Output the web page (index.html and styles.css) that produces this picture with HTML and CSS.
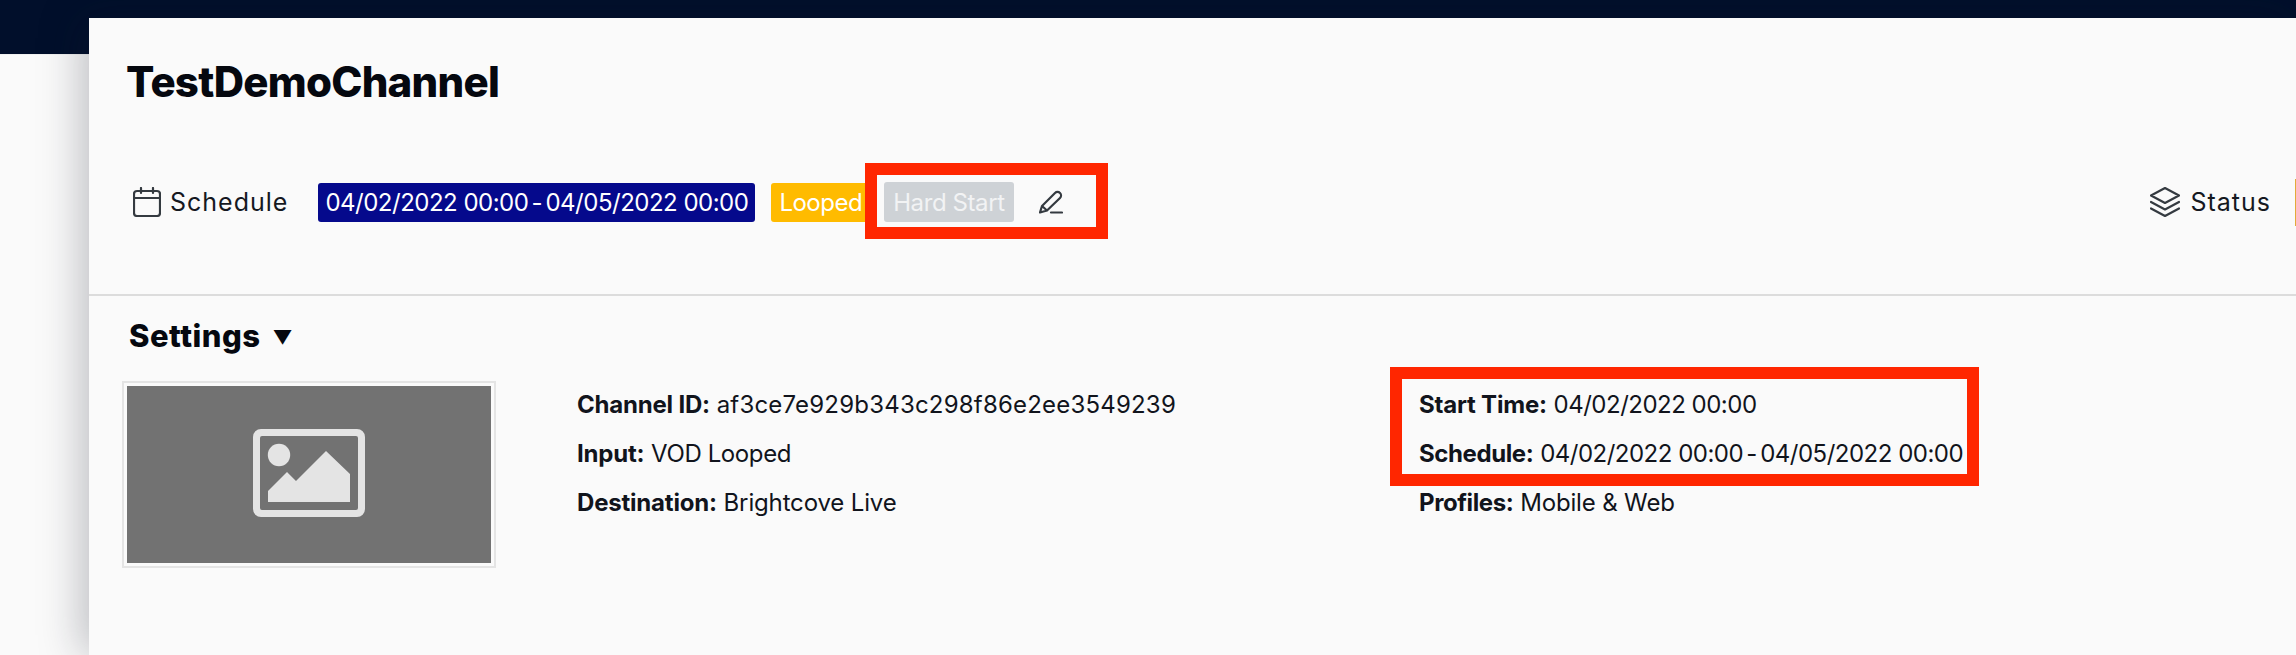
FILE: index.html
```html
<!DOCTYPE html>
<html lang="en">
<head>
<meta charset="utf-8">
<title>TestDemoChannel</title>
<link rel="stylesheet" href="styles.css">
</head>
<body>
<div class="app-header"></div>
<main class="panel">
  <h1 class="title">TestDemoChannel</h1>
  <div class="toolbar">
    <div class="label-icon">
      <svg class="icon-cal" viewBox="0 0 28 30" aria-hidden="true"><rect x="1" y="4" width="26" height="25" rx="3"/><path d="M1 11h26M8 1v5M20 1v5"/></svg>
      <span>Schedule</span>
    </div>
    <span class="badge badge-navy"><span class="num">04/02/2022 00:00</span><span class="sep">-</span><span class="num">04/05/2022 00:00</span></span>
    <span class="badge badge-yellow">Looped</span>
    <span class="badge badge-grey">Hard Start</span>
    <svg class="pencil" viewBox="0 0 24 24" aria-hidden="true"><path d="M1 22.5 3 16 16 3a3.5 3.5 0 0 1 5 5L8 20.5 1 22.5ZM3 16l5 4.5M12 22.5h11"/></svg>
    <div class="status label-icon">
      <svg class="icon-layers" viewBox="0 0 30 30" aria-hidden="true"><path d="M15 1 29 8.5 15 16 1 8.5 15 1ZM1 15l14 7.5L29 15M1 21.5 15 29l14-7.5"/></svg>
      <span>Status</span>
    </div>
  </div>
  <section class="settings">
    <h2 class="settings-title">Settings<span class="caret">▼</span></h2>
    <div class="settings-body">
      <div class="thumb">
        <div class="thumb-fill">
          <svg viewBox="0 0 112 88" aria-hidden="true"><path fill-rule="evenodd" d="M8 0h96a8 8 0 0 1 8 8v72a8 8 0 0 1-8 8H8a8 8 0 0 1-8-8V8a8 8 0 0 1 8-8Zm1 7a2 2 0 0 0-2 2v70a2 2 0 0 0 2 2h94a2 2 0 0 0 2-2V9a2 2 0 0 0-2-2H9Z"/><circle cx="26" cy="26" r="11.2"/><path d="M15 73V62l19-19 9 9 30-30 24 23v28H15Z"/></svg>
        </div>
      </div>
      <div class="col col-a">
        <div class="row"><b>Channel ID:</b> <span class="val-wide">af3ce7e929b343c298f86e2ee3549239</span></div>
        <div class="row"><b>Input:</b> <span class="val-tight">VOD Looped</span></div>
        <div class="row"><b>Destination:</b> <span class="val-snug">Brightcove Live</span></div>
      </div>
      <div class="col col-b">
        <div class="row"><b>Start Time:</b> <span class="num">04/02/2022 00:00</span></div>
        <div class="row"><b class="label-tight">Schedule:</b> <span class="num">04/02/2022 00:00</span><span class="sep">-</span><span class="num">04/05/2022 00:00</span></div>
        <div class="row"><b class="label-tight">Profiles:</b> <span class="val-snug">Mobile &amp; Web</span></div>
      </div>
    </div>
  </section>
  <div class="mark mark-one"></div>
  <div class="mark mark-two"></div>
</main>
</body>
</html>
```
FILE: styles.css
```css
* { box-sizing: border-box; }
html, body { margin: 0; height: 100%; }
body {
  width: 2296px;
  height: 655px;
  overflow: hidden;
  position: relative;
  background: #fafafa;
  font-family: "Inter", "Liberation Sans", sans-serif;
  color: #0b0f1a;
}
.app-header { height: 55px; background: #010f2b; border-bottom: 1px solid #f0f0f0; }
.panel {
  position: absolute;
  left: 89px;
  top: 18px;
  width: 2207px;
  height: 637px;
  background: #fafafa;
  box-shadow: -8px 0 40px rgba(20, 25, 40, .26);
}
.title {
  margin: 0;
  padding: 40px 0 0 37px;
  font-size: 42px;
  line-height: 48px;
  font-weight: 800;
  letter-spacing: -.75px;
  color: #05080f;
}
.toolbar {
  display: flex;
  align-items: center;
  height: 44px;
  margin-top: 74px;
  padding-left: 44px;
  font-size: 24px;
  color: #15181f;
}
.label-icon { display: flex; align-items: center; gap: 9px; font-size: 25px; letter-spacing: 1px; }
.icon-cal, .icon-layers, .pencil { fill: none; stroke: #343a40; stroke-width: 2.2; stroke-linecap: round; stroke-linejoin: round; flex: none; }
.icon-cal { width: 28px; height: 30px; }
.icon-layers { width: 30px; height: 30px; }
.pencil { width: 24px; height: 24px; margin-left: 25px; }
.badge {
  display: inline-flex;
  align-items: center;
  height: 39px;
  padding: 0 7px;
  border-radius: 3px;
  color: #fff;
  white-space: nowrap;
}
.num { letter-spacing: -.5px; }
.sep { margin: 0 3px; }
.badge-navy { margin-left: 30px; background: #05098c; }
.badge-yellow { margin-left: 16px; padding: 0 8px; letter-spacing: -.5px; background: #ffbb00; }
.badge-grey { margin-left: 14px; height: 40px; padding: 0 9px; letter-spacing: -.4px; color: #f2f3f4; background: #ced2d6; }
.status { margin-left: auto; padding-right: 24px; gap: 10px; border-right: 1px solid #e2ab3a; height: 47px; }
.settings { margin-top: 70px; border-top: 2px solid #dcdcdc; padding-top: 21px; }
.settings-title { margin: 0; padding-left: 40px; font-size: 31px; line-height: 38px; font-weight: 800; letter-spacing: .5px; color: #05080f; }
.caret { font-size: 19px; margin-left: 12px; vertical-align: 3px; letter-spacing: 0; }
.settings-body { display: flex; align-items: flex-start; padding: 24px 0 0 33px; }
.thumb {
  width: 374px;
  height: 187px;
  padding: 3px;
  border: 2px solid #e4e4e4;
  flex: none;
}
.thumb-fill { display: flex; align-items: center; justify-content: center; height: 100%; background: #727272; }
.thumb-fill svg { width: 112px; height: 88px; margin-bottom: 4px; fill: #e4e4e4; }
.col { padding-top: 8px; font-size: 24px; line-height: 32px; color: #11141c; }
.col b { font-weight: 700; letter-spacing: -.2px; }
.col .label-tight { letter-spacing: -.4px; }
.val-wide { letter-spacing: .2px; }
.val-tight { letter-spacing: -.4px; }
.val-snug { letter-spacing: -.15px; }
.row { margin-bottom: 17px; white-space: nowrap; }
.col-a { margin-left: 81px; width: 842px; }
.mark { position: absolute; border: 12px solid #ff2600; }
.mark-one { left: 776px; top: 145px; width: 243px; height: 76px; }
.mark-two { left: 1301px; top: 349px; width: 589px; height: 119px; }
```
